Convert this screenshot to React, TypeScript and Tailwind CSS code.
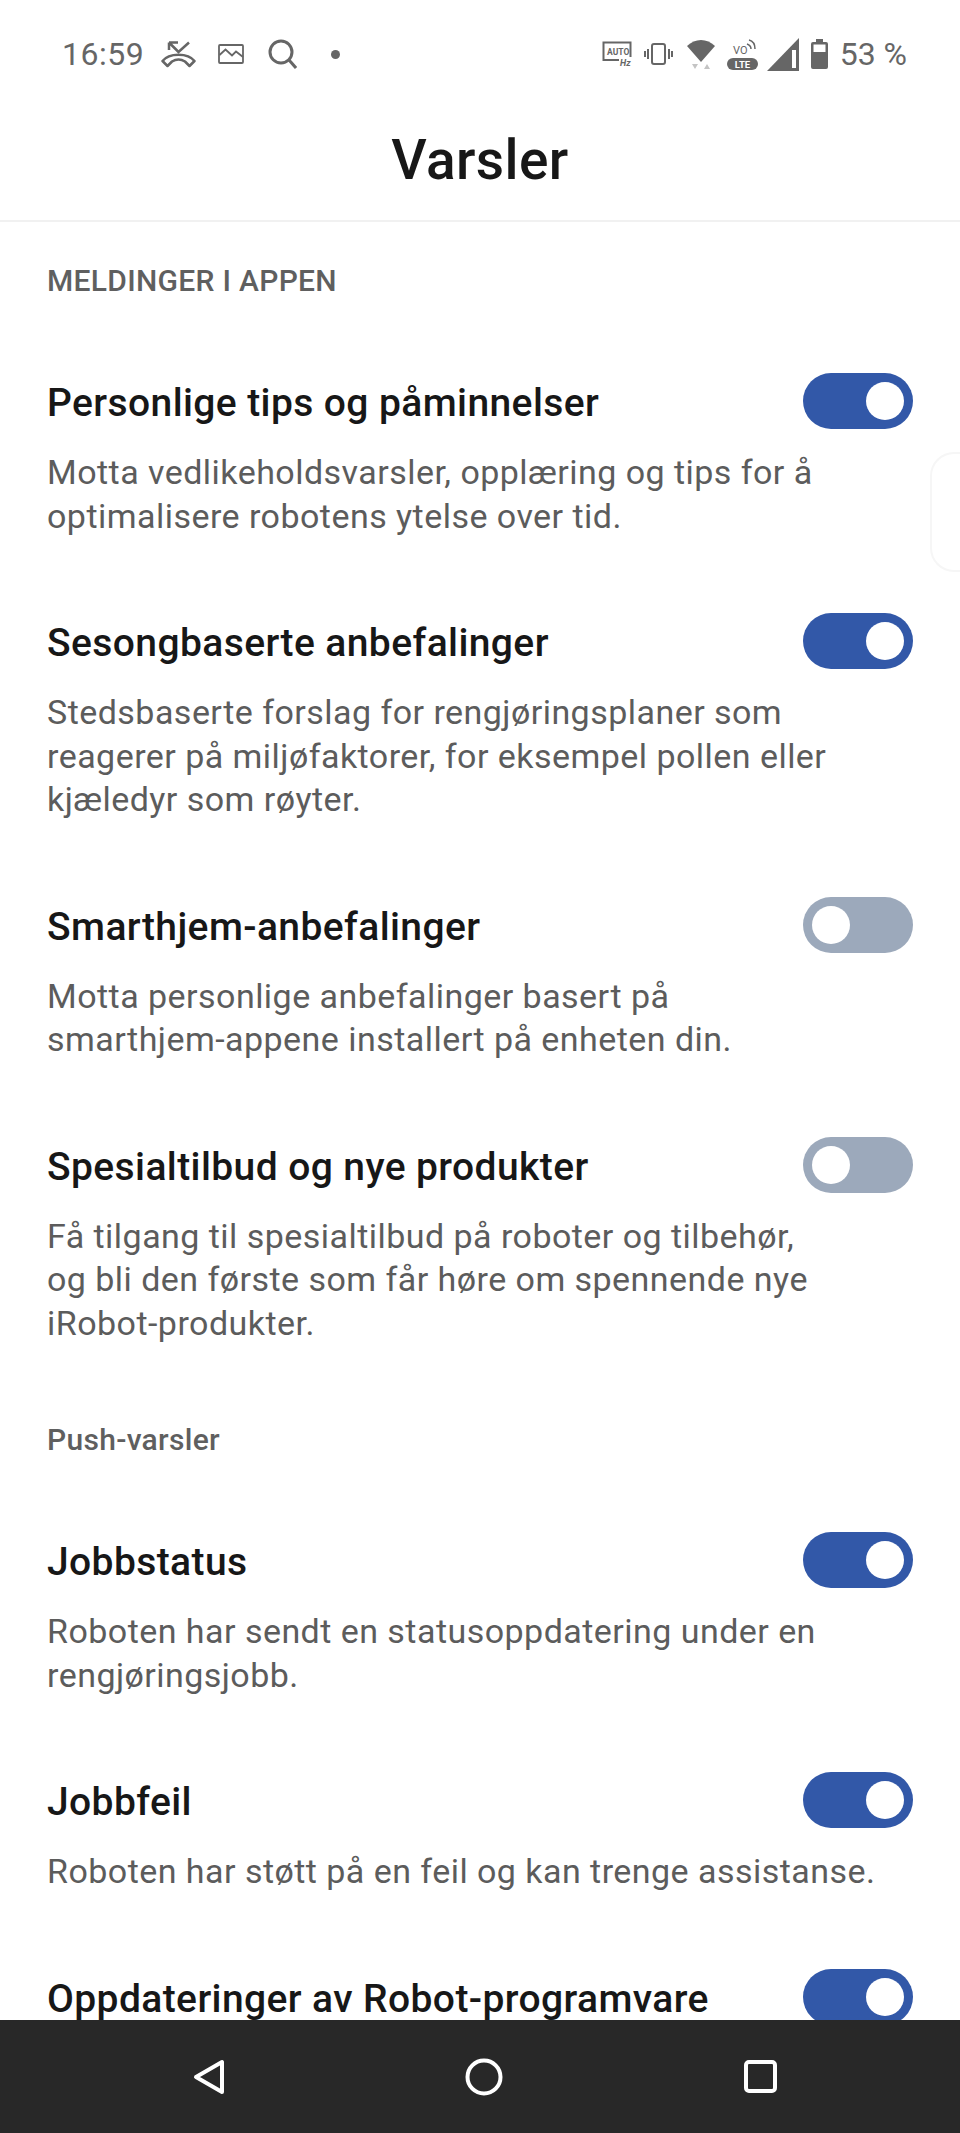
const font = { fontFamily: "Roboto, sans-serif" };

function Toggle({ on }: { on: boolean }) {
  return (
    <div
      className={`flex h-[56px] w-[110px] shrink-0 items-center rounded-full px-[9px] ${
        on ? "justify-end bg-[#3258a8]" : "justify-start bg-[#9ca9bb]"
      }`}
    >
      <div className="h-[38px] w-[38px] rounded-full bg-white" />
    </div>
  );
}

function Row({ title, desc, on }: { title: string; desc: string[]; on: boolean }) {
  return (
    <div>
      <div className="flex h-[56px] items-center justify-between">
        <h3 className="pt-[4px] text-[39px] leading-[56px] font-medium tracking-[0.4px] text-[#171717]">{title}</h3>
        <Toggle on={on} />
      </div>
      {desc.length > 0 && (
        <div className="mt-[22px] text-[34px] leading-[43.5px] tracking-[0.46px] text-[#5c5c5c]">
          {desc.map((line) => (
            <p key={line} className="whitespace-nowrap">
              {line}
            </p>
          ))}
        </div>
      )}
    </div>
  );
}

function StatusLeft() {
  return (
    <div className="flex items-center">
      <span className="w-[82px] text-[32px] tracking-[0.5px] text-[#666666]">16:59</span>
      <svg className="ml-[17px]" width="35" height="27" viewBox="0 0 35 27" fill="none" stroke="#666" strokeWidth="2.5">
        <path d="M8 1.5 L17.5 11 L28 1.5 M8 1.5 H17 M8 1.5 V9" />
        <path d="M1.5 20 C8 11.5 27 11.5 33.5 20 L28.5 25 L24 20.5 C20 18 15 18 11 20.5 L6.5 25 Z" strokeLinejoin="round" />
      </svg>
      <svg className="ml-[22px]" width="26" height="20" viewBox="0 0 26 20" fill="none" stroke="#666" strokeWidth="1.8">
        <rect x="1" y="1" width="24" height="18" rx="1" />
        <path d="M1.5 11 L7.5 5.5 L14 11.5 L18 7.5 L25 13" />
      </svg>
      <svg className="ml-[24px]" width="29" height="30" viewBox="0 0 29 30" fill="none" stroke="#666" strokeWidth="3">
        <circle cx="13" cy="13" r="11" />
        <path d="M21 21 L28 29" />
      </svg>
      <div className="ml-[34px] h-[9px] w-[9px] rounded-full bg-[#666666]" />
    </div>
  );
}

function StatusRight() {
  return (
    <div className="flex items-center">
      <svg width="30" height="26" viewBox="0 0 30 26" fill="none">
        <path d="M28.5 16 V1.5 H1.5 V19 H17" stroke="#666" strokeWidth="2" />
        <text x="5" y="14" fontSize="8.5" fontWeight="700" fill="#666" fontFamily="Roboto, sans-serif">AUTO</text>
        <text x="18" y="25" fontSize="9" fontWeight="700" fontStyle="italic" fill="#666" fontFamily="Roboto, sans-serif">Hz</text>
      </svg>
      <svg className="ml-[12px]" width="29" height="22" viewBox="0 0 29 22" fill="none" stroke="#666" strokeWidth="2">
        <rect x="8" y="1" width="13" height="20" rx="2" />
        <path d="M4 6 V16 M1 8 V14 M25 6 V16 M28 8 V14" />
      </svg>
      <svg className="ml-[14px]" width="28" height="32" viewBox="0 0 28 32">
        <path d="M0 8 C8 0 20 0 28 8 L14 24 Z" fill="#666" />
        <path d="M5 26 H11 L8 31 Z M17 31 H23 L20 26 Z" fill="#c4c4c4" />
      </svg>
      <svg className="ml-[12px]" width="31" height="32" viewBox="0 0 31 32">
        <text x="6" y="16" fontSize="11" fill="#666" fontFamily="Roboto, sans-serif">VO</text>
        <path d="M20 6 C23 7 24 9 24 11 M22 2 C26 3 28 7 28 11" fill="none" stroke="#666" strokeWidth="1.5" />
        <rect x="0" y="20" width="31" height="12" rx="6" fill="#666" />
        <text x="15.5" y="30" fontSize="9.5" fontWeight="700" fill="#fff" textAnchor="middle" fontFamily="Roboto, sans-serif">LTE</text>
      </svg>
      <svg className="ml-[9px]" width="33" height="33" viewBox="0 0 33 33">
        <path d="M0 33 L32 0 V33 Z" fill="#666" />
        <path d="M25 12 H29 V30 H25 Z" fill="#fff" />
      </svg>
      <svg className="ml-[11px]" width="17" height="30" viewBox="0 0 17 30">
        <path d="M5 0 H12 V3 H15 Q17 3 17 5 V28 Q17 30 15 30 H2 Q0 30 0 28 V5 Q0 3 2 3 H5 Z" fill="#666" />
        <path d="M2.5 5.5 H14.5 V13 H2.5 Z" fill="#fff" />
      </svg>
      <span className="ml-[12px] text-[32px] text-[#666666]">53 %</span>
    </div>
  );
}

function NavBar() {
  return (
    <div className="flex h-[113px] shrink-0 items-center justify-center gap-[241px] bg-[#282828] pl-[9px]">
      <svg width="31" height="36" viewBox="0 0 31 36" fill="none" stroke="#fff" strokeWidth="4" strokeLinejoin="round">
        <path d="M29 3 V33 L3 18 Z" />
      </svg>
      <svg width="38" height="38" viewBox="0 0 38 38" fill="none" stroke="#fff" strokeWidth="4">
        <circle cx="19" cy="19" r="16.5" />
      </svg>
      <svg width="33" height="33" viewBox="0 0 33 33" fill="none" stroke="#fff" strokeWidth="4">
        <rect x="2" y="2" width="29" height="29" rx="3" />
      </svg>
    </div>
  );
}

export default function App() {
  return (
    <div className="relative flex h-[2133px] w-[960px] flex-col overflow-hidden bg-white" style={font}>
      <div className="flex h-[108px] shrink-0 items-center justify-between pr-[53px] pl-[62px]">
        <StatusLeft />
        <StatusRight />
      </div>
      <div className="flex h-[114px] shrink-0 items-start justify-center border-b-2 border-[#f1f1f1]">
        <h1 className="text-[55px] leading-[104px] font-medium tracking-[0.4px] text-[#171717]">Varsler</h1>
      </div>

      <div className="min-h-0 flex-1 overflow-hidden pr-[47px] pl-[47px]">
        <h2 className="mt-[40px] text-[30px] leading-[38px] font-medium tracking-[0.3px] text-[#5f5f5f]">MELDINGER I APPEN</h2>
        <div className="mt-[73px] flex flex-col gap-[75px]">
          <Row
            on
            title="Personlige tips og påminnelser"
            desc={["Motta vedlikeholdsvarsler, opplæring og tips for å", "optimalisere robotens ytelse over tid."]}
          />
          <Row
            on
            title="Sesongbaserte anbefalinger"
            desc={[
              "Stedsbaserte forslag for rengjøringsplaner som",
              "reagerer på miljøfaktorer, for eksempel pollen eller",
              "kjæledyr som røyter.",
            ]}
          />
          <Row
            on={false}
            title="Smarthjem-anbefalinger"
            desc={["Motta personlige anbefalinger basert på", "smarthjem-appene installert på enheten din."]}
          />
          <Row
            on={false}
            title="Spesialtilbud og nye produkter"
            desc={[
              "Få tilgang til spesialtilbud på roboter og tilbehør,",
              "og bli den første som får høre om spennende nye",
              "iRobot-produkter.",
            ]}
          />
        </div>
        <h2 className="mt-[76px] text-[30px] leading-[38px] font-medium tracking-[0.3px] text-[#5f5f5f]">Push-varsler</h2>
        <div className="mt-[73px] flex flex-col gap-[75px]">
          <Row
            on
            title="Jobbstatus"
            desc={["Roboten har sendt en statusoppdatering under en", "rengjøringsjobb."]}
          />
          <Row on title="Jobbfeil" desc={["Roboten har støtt på en feil og kan trenge assistanse."]} />
          <Row on title="Oppdateringer av Robot-programvare" desc={[]} />
        </div>
      </div>

      <NavBar />
      <div className="absolute top-[452px] right-0 h-[120px] w-[30px] rounded-l-[24px] border-y-2 border-l-2 border-[#f6f6f6]" />
    </div>
  );
}
